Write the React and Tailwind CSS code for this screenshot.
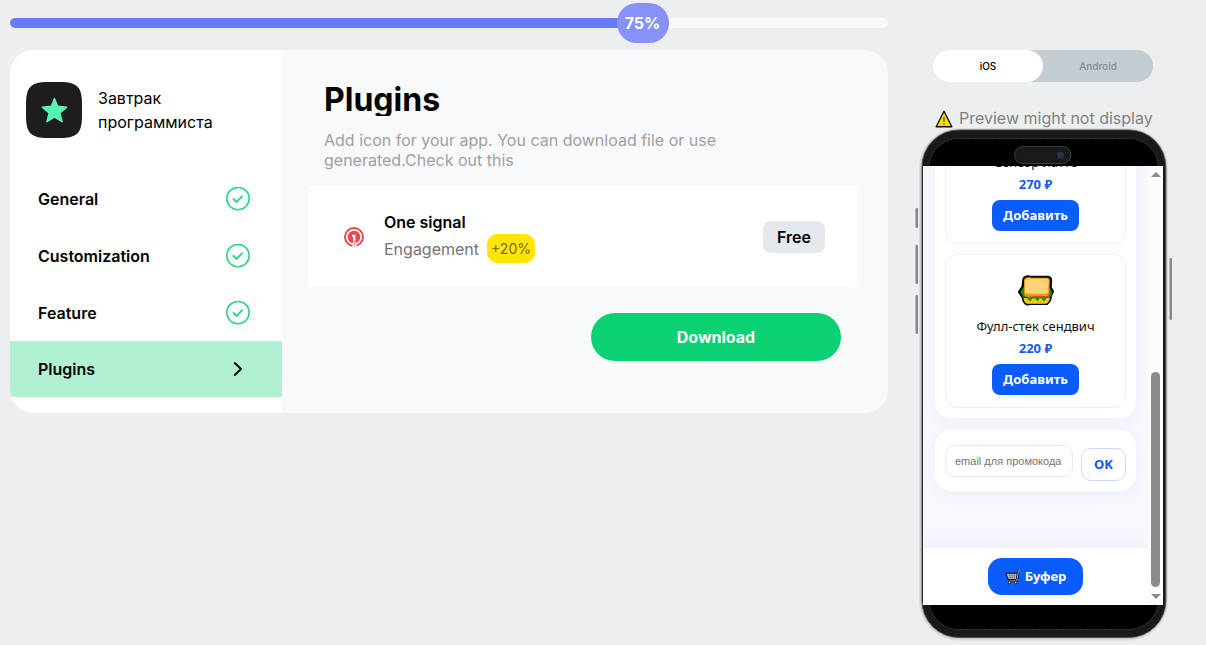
import React, { useState } from "react";

const steps = [
  { name: "General", done: true },
  { name: "Customization", done: true },
  { name: "Feature", done: true },
  { name: "Plugins", done: false },
];

const CheckIcon = () => (
  <svg className="w-6 h-6" viewBox="0 0 24 24" fill="none" stroke="#2fd682" strokeLinecap="round" strokeLinejoin="round">
    <circle cx="12" cy="11.6" r="11.2" strokeWidth="1.6" />
    <path d="M7.500 12l3.100 2.900 5.400-5.500" strokeWidth="2" />
  </svg>
);

const ChevronIcon = () => (
  <svg className="w-6 h-6" viewBox="0 0 24 24" fill="none" stroke="#0b0b0b" strokeWidth="2" strokeLinecap="round" strokeLinejoin="round">
    <path d="M8.800 6l6.200 6-6.200 6" />
  </svg>
);

const StarIcon = () => (
  <svg className="w-14 h-14 shrink-0" viewBox="0 0 56 56">
    <path d="M0 22C0 5 5 0 22 0h12c17 0 22 5 22 22v12c0 17-5 22-22 22H22C5 56 0 51 0 34z" fill="#1d1d1d" />
    <path
      d="M28.5 16.5l3.2 7.7 9 .9-6.8 5.8 2.2 8.8-7.6-4.6-7.6 4.6 2.2-8.8-6.8-5.8 9-.9z"
      fill="#54f6b8"
      stroke="#54f6b8"
      strokeWidth="1.4"
      strokeLinejoin="round"
    />
  </svg>
);

const OneSignalIcon = () => (
  <svg className="w-5 h-5" viewBox="0 0 20 20">
    <circle cx="10" cy="10" r="9" fill="none" stroke="#e54b4d" strokeWidth="2" />
    <circle cx="10" cy="10" r="6.300" fill="#e54b4d" />
    <path d="M8 7.800h3.400V20.500H9.300V9.800H8z" fill="#fff" />
    <path d="M8.400 15.500h4v5h-4z" fill="#fff" />
    <path d="M9.700 13.500h1.300V20H9.700z" fill="#f3a5a6" />
  </svg>
);

const WarningIcon = () => (
  <svg className="w-5 h-5 shrink-0" viewBox="0 0 20 20">
    <path d="M11 3.300l7.800 15.400H3.200z" fill="#ffde00" stroke="#111" strokeWidth="1.400" strokeLinejoin="round" />
    <path d="M11 9v5M11 15.200v1.600" stroke="#7a6700" strokeWidth="1.600" />
  </svg>
);

const SandwichIcon = () => (
  <svg className="w-9 h-8" viewBox="0 0 36 32">
    <path
      d="M5.500 4C6 1.500 10 .8 12.500 1.800h17.500c2 .4 3.400 2 3 4.500l-.3 6.200 2.300 4-2.300 4.500c.3 4-1.700 6.500-4 8H12c-4 1.500-7-1.500-7.300-6.500L1 17l3.500-5z"
      fill="#0b0b0b"
      stroke="#0b0b0b"
      strokeWidth="2.200"
      strokeLinejoin="round"
    />
    <path d="M5.500 12L2.500 17l3 5.500h26.500l2-5.500-3-5z" fill="#16990f" />
    <path d="M5.500 23h26.500c-.5 3-2 5-4 5.800H12c-4 .8-6.200-2-6.500-5.800z" fill="#ffc61a" />
    <path d="M7 20h24v3H10z" fill="#ec2d20" />
    <path d="M9 23l3 3.500 3-3h2l2.500 3 2-3h2l2.500 3.200 3-4z" fill="#119a12" />
    <path d="M6 5c1-3 5-3 7.500-2.200h15.500c2 .2 3 1.500 2.800 3.500l-.6 12c-.3 2.200-1 2.900-3 2.900H14c-4 1.500-8 .5-8-3z" fill="#e79a13" />
    <path d="M7 5.500c1-2.500 4-2 6-1.700h15.500c1.500 0 2.300 1 2.200 2.500l-.6 10.500c-.2 1.500-.8 1.900-2.200 1.900H13c-3 0-6 .4-6-2z" fill="#ffd479" />
    <path d="M25 6.500h1.200M27.500 6.500h1.200M27.500 8.800h1" stroke="#df9a25" />
  </svg>
);

const CartIcon = () => (
  <svg className="w-4 h-4" viewBox="0 0 16 16" fill="none" strokeLinejoin="round">
    <path d="M1 4.200h11.500l-1 6.300H3z" fill="#c6c6c6" stroke="#171b25" strokeWidth="1.200" />
    <path d="M2.500 6.200h9M3 8.400h8.500M4.800 4.800l.4 5.400M7.200 4.800v5.400M9.600 4.800l-.3 5.400" stroke="#74767a" strokeWidth=".7" />
    <path d="M15 2l-1.700.6-1.500 9.200H3.500" stroke="#171b25" strokeWidth="2.200" />
    <path d="M14.500 2.200l-1.200.4-1.500 9.200H4" stroke="#b9b9b9" strokeWidth=".8" />
    <path d="M13.700 2.200l1.500-.5" stroke="#ee8068" strokeWidth="1.300" />
    <circle cx="4.500" cy="13.500" r="1.300" fill="#ddd" stroke="#171b25" />
    <circle cx="10.700" cy="13.500" r="1.300" fill="#ddd" stroke="#171b25" />
  </svg>
);

const PhoneFrame = () => (
  <svg className="absolute inset-0 w-full h-full overflow-visible" viewBox="0 0 250 512" fill="none" aria-hidden="true">
    <g fill="#88888c">
      <rect x="-2.500" y="80" width="2.500" height="20" rx="1" />
      <rect x="-2.500" y="117" width="2.500" height="39" rx="1" />
      <rect x="-2.500" y="167" width="2.500" height="39" rx="1" />
      <rect x="251.500" y="130" width="2.500" height="62" rx="1" />
    </g>
    <rect x="1" y="0" width="249" height="512.500" rx="40" fill="#dcdcdf" />
    <rect x="2.500" y="1" width="246.500" height="510" rx="38.500" fill="#c2c2c6" />
    <rect x="4" y="2" width="243.800" height="507.500" rx="37" fill="#191a18" stroke="#4a4a4a" strokeWidth=".8" />
    <rect x="11" y="10.500" width="229.500" height="491" rx="30" fill="#000" stroke="#454d49" strokeWidth=".8" strokeDasharray="2 1" />
    <rect x="96.500" y="18.500" width="56.500" height="17" rx="8.500" fill="#181a19" stroke="#41504a" strokeWidth=".8" />
    <circle cx="142.500" cy="27" r="3.500" fill="#2b323c" />
    <circle cx="142.500" cy="26.500" r="1.500" fill="#143a78" />
  </svg>
);

const Product = ({ name, price, children }) => (
  <div className="flex flex-col items-center rounded-xl border border-[#f0f1f8] px-2 pt-5 pb-3">
    {children}
    <p className="mt-[9px] text-[13px] leading-5 text-[#111]">{name}</p>
    <p className="mt-1 text-[13px] leading-4 font-bold text-[#1659ee]">{price}</p>
    <button className="mt-2 h-[31px] rounded-lg bg-[#0b5cff] px-[11px] text-[13px] font-bold text-white">Добавить</button>
  </div>
);

const Phone = () => (
  <div className="relative w-full pt-[38px] pb-[35px] pl-[5px] pr-[5px]">
    <PhoneFrame />
    <div className="relative flex h-[439px] bg-white font-['Noto_Sans',sans-serif]">
      <div className="flex min-w-0 flex-1 flex-col overflow-hidden bg-[#f8f9ff]">
        <div className="flex min-h-0 flex-1 flex-col justify-end px-3 pb-[57px]">
          <div className="flex flex-col gap-[10px] rounded-2xl bg-white p-[10px] shadow-[0_4px_16px_rgba(30,40,110,0.05)]">
            <Product name="Сенсор-латте" price="270 ₽">
              <div className="h-8 shrink-0" />
            </Product>
            <Product name="Фулл-стек сендвич" price="220 ₽">
              <SandwichIcon />
            </Product>
          </div>
          <form className="mt-3 flex items-start gap-2 rounded-2xl bg-white px-[10px] pt-[15px] pb-[10px] shadow-[0_4px_16px_rgba(30,40,110,0.05)]">
            <input
              type="email"
              aria-label="email для промокода"
              placeholder="email для промокода"
              className="h-8 min-w-0 flex-1 rounded-[10px] border border-[#e6e8f6] px-[9px] font-['Liberation_Sans',sans-serif] text-[11px] placeholder:text-[#757575]"
            />
            <button type="button" className="mt-[3px] h-[33px] w-[45px] rounded-[10px] border border-[#c9dafb] text-[13px] font-bold text-[#1659ee]">
              OK
            </button>
          </form>
        </div>
        <div className="flex justify-center bg-white py-[10px] shadow-[0_-4px_16px_rgba(30,40,110,0.06)]">
          <button className="flex h-[37px] items-center gap-1 rounded-[14px] bg-[#0b5cff] px-[17px] text-[13px] font-bold text-white">
            <CartIcon />
            Буфер
          </button>
        </div>
      </div>
      {/* Scrollbar */}
      <div className="flex w-[15px] flex-col items-center bg-[#fcfcfc] py-[6px]">
        <svg className="w-[10px] h-[5px]" viewBox="0 0 10 5" fill="#8b8b8b"><path d="M5 0l5 5H0z" /></svg>
        <div className="flex-1" />
        <div className="h-[215px] w-[9px] rounded-full bg-[#8b8b8b]" />
        <svg className="mt-[7px] w-[10px] h-[5px]" viewBox="0 0 10 5" fill="#8b8b8b"><path d="M5 5l5-5H0z" /></svg>
      </div>
    </div>
  </div>
);

const App = () => {
  const [platform, setPlatform] = useState("iOS");
  const progress = 75;

  return (
    <div className="flex min-h-screen items-start gap-[30px] bg-[#edeef0] pl-[10px] pr-[38px] font-['Inter',sans-serif] text-black">
      <main className="min-w-0 flex-1">
        {/* Progress */}
        <div className="mt-[18px] h-[10px] rounded-full bg-[#f8f9fb]">
          <div className="flex h-full items-center justify-end rounded-full bg-[#6979f8]" style={{ width: `${progress}%` }}>
            <span className="flex h-10 w-[52px] shrink-0 items-center justify-center rounded-[20px] bg-[#8791fa] text-base font-bold text-white">
              {progress}%
            </span>
          </div>
        </div>

        <div className="mt-[22px] flex overflow-hidden rounded-3xl bg-[#f8f9fb]">
          {/* Sidebar */}
          <aside className="w-[272px] shrink-0 bg-white pt-8 pb-4">
            <div className="mb-8 flex items-center gap-4 px-4">
              <StarIcon />
              <p className="text-base">Завтрак программиста</p>
            </div>
            <nav>
              {steps.map((step) => (
                <a
                  key={step.name}
                  href={`#${step.name.toLowerCase()}`}
                  className={`flex items-center justify-between pl-7 pr-8 font-semibold ${step.done ? "h-[57px]" : "h-14 bg-[#b1f0d2]"}`}
                >
                  {step.name}
                  {step.done ? <CheckIcon /> : <ChevronIcon />}
                </a>
              ))}
            </nav>
          </aside>

          {/* Plugins */}
          <section className="min-w-0 flex-1 pt-[34px] pl-[26px] pr-[31px]">
            <div className="px-4">
              <h1 className="overflow-hidden text-[32px] leading-8 font-bold">Plugins</h1>
              <p className="mt-[14px] max-w-[420px] leading-5 text-[#9f9f9f]">
                Add icon for your app. You can download file or use generated.Check out this
              </p>
            </div>
            <div className="mt-4 flex h-[101px] items-center rounded bg-white pl-9 pr-8">
              <OneSignalIcon />
              <div className="ml-5 flex-1">
                <h2 className="leading-6 font-semibold">One signal</h2>
                <p className="flex items-center gap-2 text-[#737373]">
                  Engagement
                  <span className="rounded-[10px] bg-[#ffe500] px-1 py-1 text-sm leading-[21px] text-[#736b19]">+20%</span>
                </p>
              </div>
              <span className="rounded-lg bg-[#e4e9ed] px-[14px] py-1 font-semibold">Free</span>
            </div>
            <div className="mt-[26px] flex justify-end pr-4">
              <button className="h-12 w-[250px] rounded-full bg-[#0bd172] font-bold text-white">Download</button>
            </div>
          </section>
        </div>
      </main>

      {/* Preview */}
      <aside className="w-[250px] shrink-0 pt-[50px]">
        <div className="mx-[15px] flex h-8 rounded-full bg-[#c4ced2] text-[10px] font-medium">
          {["iOS", "Android"].map((item) => (
            <button
              key={item}
              onClick={() => setPlatform(item)}
              className={`flex-1 rounded-full ${platform === item ? "bg-white text-black" : "text-[#858a9b]"}`}
            >
              {item}
            </button>
          ))}
        </div>
        <p className="mx-[15px] mt-[26px] flex h-5 items-center gap-[6px] leading-5 whitespace-nowrap text-[#828282]">
          <WarningIcon />
          Preview might not display
        </p>
        <Phone />
      </aside>
    </div>
  );
};

export default App;
